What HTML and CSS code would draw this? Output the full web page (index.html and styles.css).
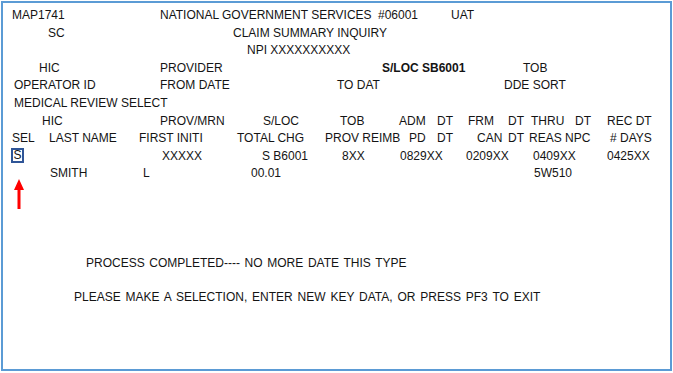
FILE: index.html
```html
<!DOCTYPE html>
<html lang="en">
<head>
<meta charset="utf-8">
<title>Claim Summary Inquiry</title>
<link rel="stylesheet" href="styles.css">
</head>
<body>
<div class="screen">
  <div class="row r1"><span>MAP1741</span><span>NATIONAL GOVERNMENT SERVICES</span><span>#06001</span><span>UAT</span></div>
  <div class="row r2"><span>SC</span><span>CLAIM SUMMARY INQUIRY</span></div>
  <div class="row r3"><span>NPI XXXXXXXXXX</span></div>
  <div class="row r4"><span>HIC</span><span>PROVIDER</span><span class="bold">S/LOC SB6001</span><span>TOB</span></div>
  <div class="row r5"><span>OPERATOR ID</span><span>FROM DATE</span><span>TO DAT</span><span>DDE SORT</span></div>
  <div class="row r6"><span>MEDICAL REVIEW SELECT</span></div>
  <div class="row r7"><span>HIC</span><span>PROV/MRN</span><span>S/LOC</span><span>TOB</span><span>ADM</span><span>DT</span><span>FRM</span><span>DT</span><span>THRU</span><span>DT</span><span>REC DT</span></div>
  <div class="row r8"><span>SEL</span><span>LAST NAME</span><span>FIRST INITI</span><span>TOTAL CHG</span><span>PROV REIMB</span><span>PD</span><span>DT</span><span>CAN</span><span>DT</span><span>REAS</span><span>NPC</span><span># DAYS</span></div>
  <div class="row r9"><span><span class="sel-box">S</span></span><span>XXXXX</span><span>S B6001</span><span>8XX</span><span>0829XX</span><span>0209XX</span><span>0409XX</span><span>0425XX</span></div>
  <div class="row r10"><span>SMITH</span><span>L</span><span>00.01</span><span>5W510</span></div>
  <div class="message msg1">PROCESS COMPLETED---- NO MORE DATE THIS TYPE</div>
  <div class="message msg2">PLEASE MAKE A SELECTION, ENTER NEW KEY DATA, OR PRESS PF3 TO EXIT</div>
  <svg class="arrow" width="12" height="30" viewBox="0 0 12 30" aria-hidden="true">
    <polygon points="6,0 11,11 7.5,11 7.5,30 4.5,30 4.5,11 1,11" fill="#ff0000"/>
  </svg>
</div>
</body>
</html>
```
FILE: styles.css
```css
html, body {
  margin: 0;
  padding: 0;
  background: #ffffff;
}

body {
  font-family: "Liberation Sans", Arial, sans-serif;
  font-size: 12px;
  color: #141414;
}

.screen {
  position: relative;
  box-sizing: border-box;
  width: 671px;
  height: 370px;
  margin: 1px 0 0 1px;
  border: 2px solid #5b9bd5;
  padding-top: 4px;
}

.row {
  display: grid;
  height: 17.6px;
  line-height: 17.6px;
  white-space: pre;
}

.bold { font-weight: bold; }

.r1 { padding-left: 9px; grid-template-columns: 148px 218px 73px auto; }
.r2 { padding-left: 45px; grid-template-columns: 185px auto; }
.r3 { padding-left: 244px; }
.r4 { padding-left: 36px; grid-template-columns: 121px 222px 141px auto; }
.r5 { padding-left: 11px; grid-template-columns: 146px 177px 167px auto; }
.r6 { padding-left: 11px; }
.r7 { padding-left: 39px; grid-template-columns: 118px 103px 77px 59px 38px 31px 40px 23px 44px 32px auto; }
.r8 { padding-left: 9px; grid-template-columns: 37px 90px 98px 88px 84px 28px 40px 31px 21px 36px 45px auto; }
.r9 { padding-left: 8px; grid-template-columns: 151px 100px 80px 58px 66px 67px 74px auto; }
.r10 { padding-left: 47px; grid-template-columns: 93px 108px 283px auto; }

.sel-box {
  display: inline-block;
  width: 9px;
  line-height: 11px;
  border: 2px solid #2f5597;
  text-align: center;
  vertical-align: 2px;
}

.message {
  line-height: 17.6px;
  white-space: pre;
}

.msg1 { margin-top: 72px; padding-left: 83px; word-spacing: 1.3px; }
.msg2 { margin-top: 16px; padding-left: 71px; word-spacing: 1.5px; }

.arrow {
  position: absolute;
  left: 10px;
  top: 176px;
}
```
